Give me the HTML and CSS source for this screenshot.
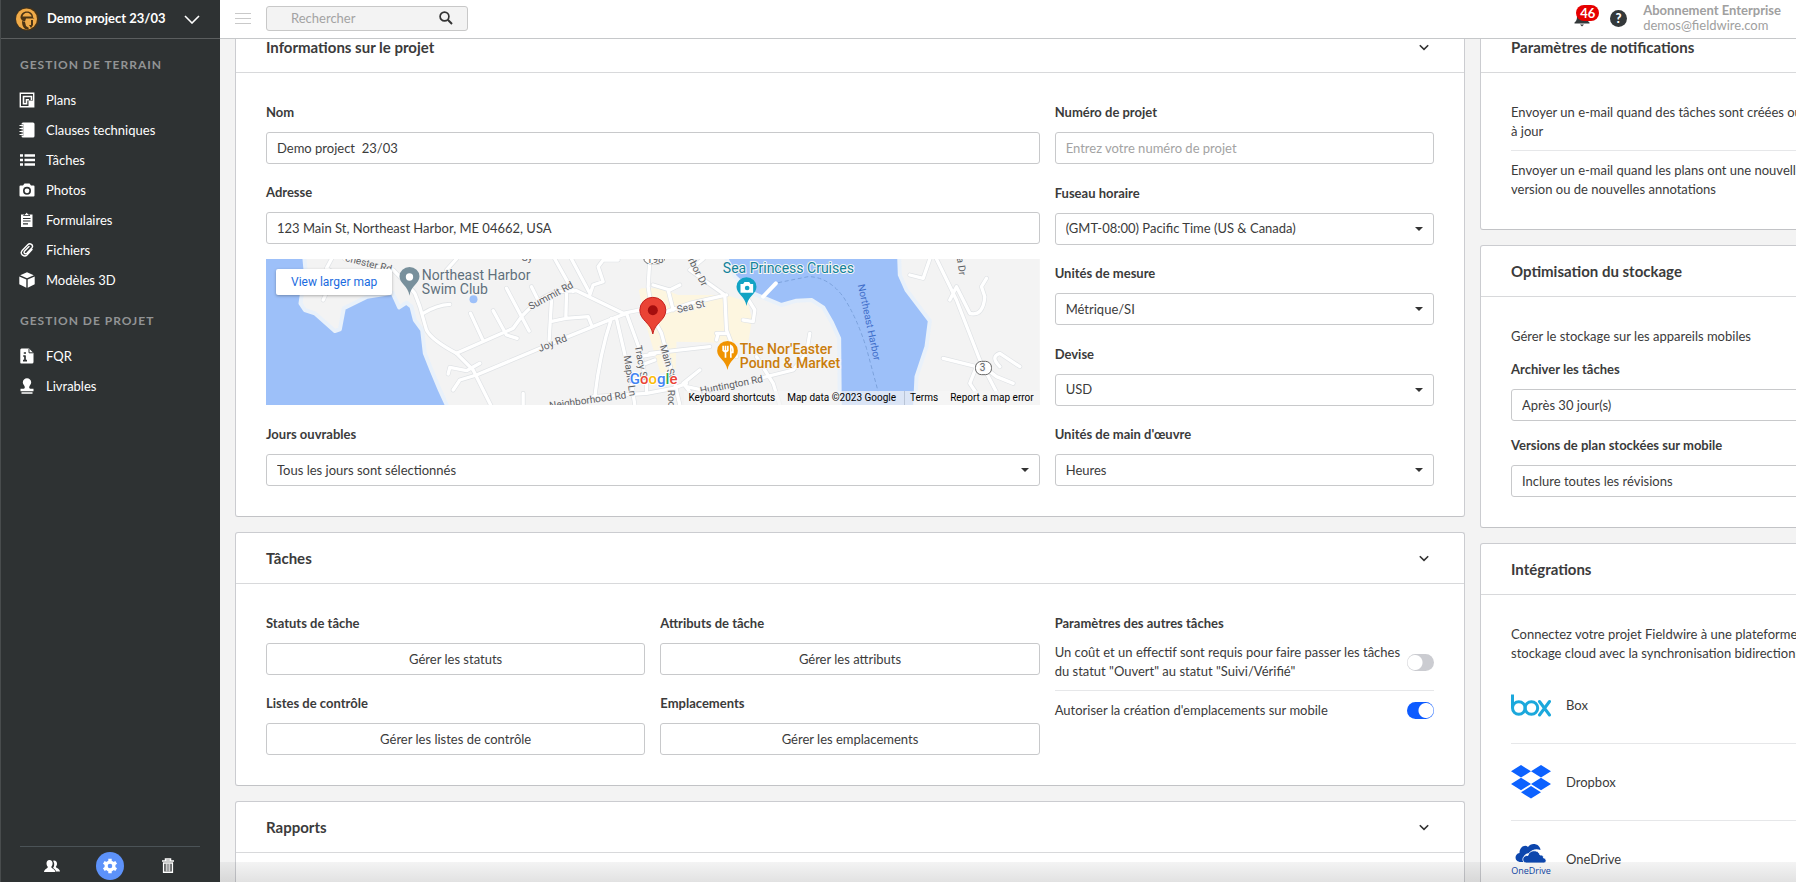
FILE: index.html
```html
<!DOCTYPE html>
<html lang="fr">
<head>
<meta charset="utf-8">
<meta name="viewport" content="width=device-width, initial-scale=1">
<title>Demo project 23/03 – Paramètres</title>
<link rel="stylesheet" href="styles.css">
</head>
<body>
<div class="app">
  <aside class="sidebar">
    <button class="project" type="button">
      <svg class="project-logo" viewBox="0 0 24 24" aria-hidden="true">
        <circle cx="12" cy="12" r="11.500" fill="#4a3416"/>
        <circle cx="11.500" cy="12" r="10.500" fill="#f0ab49"/>
        <path d="M5.500 11c0-4 2.500-6.500 6.500-6.500s6 2.500 6 6l1.500 1H11l-1 3-3-1z" fill="#4a3416"/>
        <path d="M7.500 9.500c.5-2 2-3.800 4.500-3.800s4.200 1.800 4.600 3.800z" fill="#f0ab49"/>
        <path d="M7 14l3 1 1 4 3 2-1 1.500c-4 0-6-3-6-8.500zM16 13h2v5l-2 3-2-3h2z" fill="#4a3416"/>
      </svg>
      <span class="project-name">Demo project 23/03</span>
      <svg class="project-chevron" viewBox="0 0 16 9" aria-hidden="true"><path d="M1 1l7 7 7-7" fill="none" stroke="#fff" stroke-width="1.600"/></svg>
    </button>

    <nav class="nav">
      <h2 class="nav-title">Gestion de terrain</h2>
      <ul class="nav-list">
        <li><a class="nav-item" href="#plans"><svg viewBox="0 0 16 16" aria-hidden="true"><path d="M1.300 1.300h13.400v13.400H1.300z" fill="none" stroke="#fff" stroke-width="1.400"/><path d="M4.500 12.500V4.500h8V8M4.500 11.700H7.500V7.700h2.500" fill="none" stroke="#fff" stroke-width="1.600"/><path d="M9.500 8.500H15V15H9.500z" fill="#fff"/></svg>Plans</a></li>
        <li><a class="nav-item" href="#clauses"><svg viewBox="0 0 16 16" aria-hidden="true"><path d="M4 .5h10a1.500 1.500 0 0 1 1.500 1.500v12a1.500 1.500 0 0 1-1.500 1.500H4A1.500 1.500 0 0 1 2.500 14V2A1.500 1.500 0 0 1 4 .5z" fill="#fff"/><path d="M.5 3.500h4M.5 6.500h4M.5 9.500h4M.5 12.500h4" stroke="#2e3233" stroke-width="2"/><path d="M.5 3.500h4M.5 6.500h4M.5 9.500h4M.5 12.500h4" stroke="#fff" stroke-width="1.200"/></svg>Clauses techniques</a></li>
        <li><a class="nav-item" href="#taches"><svg viewBox="0 0 16 16" aria-hidden="true"><path d="M1 3.500h3M1 8h3M1 12.500h3M5.500 3.500H16M5.500 8H16M5.500 12.500H16" stroke="#fff" stroke-width="2.400"/></svg>Tâches</a></li>
        <li><a class="nav-item" href="#photos"><svg viewBox="0 0 16 16" aria-hidden="true"><path fill="#fff" fill-rule="evenodd" d="M5.500 1.500h5L12 3.500h2.500A1 1 0 0 1 15.500 4.500v9a1 1 0 0 1-1 1h-13a1 1 0 0 1-1-1v-9a1 1 0 0 1 1-1H4zM8 4.800a4 4 0 1 0 0 8 4 4 0 0 0 0-8zm0 1.600a2.400 2.400 0 1 1 0 4.800 2.400 2.400 0 0 1 0-4.800z"/></svg>Photos</a></li>
        <li><a class="nav-item" href="#formulaires"><svg viewBox="0 0 16 16" aria-hidden="true"><path d="M2 2.500h11.500V15H2z" fill="#fff"/><path d="M4.500 3.500L7.700.5 11 3.500z" fill="#fff" stroke="#2e3233" stroke-width=".8"/><path d="M4 6.500h7.500M4 9h7.500M4 11.800h5" stroke="#2e3233" stroke-width="1.200"/></svg>Formulaires</a></li>
        <li><a class="nav-item" href="#fichiers"><svg viewBox="0 0 16 16" aria-hidden="true"><path d="M13 7.500l-5 5.500c-2.500 2.600-7.500-.8-5-4.200L9 2.500c2-2 5.800.6 4 3.200L7.800 11.300c-1.400 1.300-3.600-.4-2.400-2L10 4.500" fill="none" stroke="#fff" stroke-width="1.400" stroke-linecap="round"/></svg>Fichiers</a></li>
        <li><a class="nav-item" href="#modeles"><svg viewBox="0 0 16 16" aria-hidden="true"><path d="M8 .3l6.800 3L8 6.300l-6.800-3zM.3 4.500l7 3v8.200l-7-3.400zM15.700 4.500l-7 3v8.200l7-3.400z" fill="#fff"/></svg>Modèles 3D</a></li>
      </ul>
      <h2 class="nav-title">Gestion de projet</h2>
      <ul class="nav-list">
        <li><a class="nav-item" href="#fqr"><svg viewBox="0 0 16 16" aria-hidden="true"><path d="M2.500.5H10l4.500 4.500v9a1.500 1.500 0 0 1-1.500 1.500H2.500A1.200 1.200 0 0 1 1.300 14V2A1.500 1.500 0 0 1 2.500.5z" fill="#fff"/><path d="M10 .8v4h4.300" fill="none" stroke="#2e3233" stroke-width="1"/><path d="M4.800 5h2.200M4.200 8h2.500M4 12.700h4M6 8v4.500" fill="none" stroke="#2e3233" stroke-width="1.700"/></svg>FQR</a></li>
        <li><a class="nav-item" href="#livrables"><svg viewBox="0 0 16 16" aria-hidden="true"><path d="M8 .3a4.200 4.200 0 0 1 4.200 4.200c0 2-2 3-2 4.800 0 1 .8 1.500 2 1.500h2.300v2.400h-13v-2.400h2.300c1.200 0 2-.5 2-1.500 0-1.800-2-2.800-2-4.800A4.200 4.200 0 0 1 8 .3zM2.500 14.300h11v1.400h-11z" fill="#fff"/></svg>Livrables</a></li>
      </ul>
    </nav>

    <div class="sidebar-foot">
      <button class="foot-btn" type="button" aria-label="Utilisateurs"><svg viewBox="0 0 16 16" aria-hidden="true"><path d="M10 2.500c2 0 3 1.400 3 3.200 0 1.400-.6 2.300-1.200 3 .3 1.500 4 1.700 4.200 4.800h-4c-.3-2-2-3-3-3.500.6-1 1.200-2 1.200-3.800 0-1.500-.5-2.500-1-3.300.2-.3.500-.4.800-.4z" fill="#fff"/><path d="M5.500 2c2 0 3.100 1.500 3.100 3.500 0 1.600-.7 2.700-1.400 3.400.3 1.600 4 1.800 4.200 5.100H0c.2-3.300 3.600-3.500 3.900-5.100C3.200 8.200 2.500 7.100 2.500 5.500 2.500 3.500 3.500 2 5.500 2z" fill="#fff"/></svg></button>
      <button class="foot-btn foot-btn-active" type="button" aria-label="Paramètres"><svg viewBox="0 0 16 16" aria-hidden="true"><circle cx="8" cy="8" r="3.900" fill="none" stroke="#fff" stroke-width="3.200"/><path d="M8 .8v2.500M8 12.700v2.500M1.800 4.400L4 5.700M12 10.300l2.200 1.300M1.800 11.600L4 10.300M12 5.700l2.200-1.300" stroke="#fff" stroke-width="3.400"/></svg></button>
      <button class="foot-btn" type="button" aria-label="Corbeille"><svg viewBox="0 0 16 16" aria-hidden="true"><path d="M5.500 2.500V1h5v1.500M2 3h12" fill="none" stroke="#fff" stroke-width="1.500"/><path d="M3.600 5h8.800v9.300h-8.800z" fill="none" stroke="#fff" stroke-width="1.400"/><path d="M6.200 5.500v8M8 5.500v8M9.800 5.500v8" stroke="#fff" stroke-width="1.100"/></svg></button>
    </div>
  </aside>

  <div class="page">
    <header class="topbar">
      <button class="burger" type="button" aria-label="Menu"><svg viewBox="0 0 16 12" aria-hidden="true"><path d="M0 1.500h16M0 6.500h16M0 11.500h16" stroke="#c9c9c9"/></svg></button>
      <form class="search" role="search">
        <input class="search-input" type="text" placeholder="Rechercher" aria-label="Rechercher">
        <button class="search-btn" type="button" aria-label="Lancer la recherche"><svg viewBox="0 0 14 14" aria-hidden="true"><circle cx="5.500" cy="5.500" r="4.400" fill="none" stroke="#333" stroke-width="1.700"/><path d="M8.800 8.800l4.200 4.200" stroke="#333" stroke-width="2"/></svg></button>
      </form>
      <div class="account">
        <button class="bell" type="button" aria-label="Notifications"><svg viewBox="0 0 16 18" aria-hidden="true"><path d="M8 2c3.500 0 5 2.500 5 5.500 0 3.500.8 4.500 2.500 6v1H.5v-1C2.200 12 3 11 3 7.500 3 4.500 4.500 2 8 2zM6 15.500h4L8 17.500z" fill="#34393b"/></svg><span class="badge">46</span></button>
        <button class="help" type="button" aria-label="Aide">?</button>
        <div class="user"><strong>Abonnement Enterprise</strong><span>demos@fieldwire.com</span></div>
      </div>
    </header>

    <main class="scroller">
      <div class="columns">
        <div class="column">
          <section class="card">
            <header class="card-head"><h2>Informations sur le projet</h2><button class="fold" type="button" aria-label="Replier"><svg viewBox="0 0 10 7" aria-hidden="true"><path d="M.8 1.200L5 5.400l4.200-4.200" fill="none" stroke="#333" stroke-width="1.600"/></svg></button></header>
            <div class="card-body thirds">
              <div class="info-main">
                <div class="field"><label for="nom">Nom</label><input class="control" id="nom" type="text" value="Demo project  23/03"></div>
                <div class="address">
                  <div class="field"><label for="adresse">Adresse</label><input class="control" id="adresse" type="text" value="123 Main St, Northeast Harbor, ME 04662, USA"></div>
                  <div class="map">
                    <svg class="map-canvas" viewBox="0 0 774 146" preserveAspectRatio="xMidYMid slice" role="img" aria-label="Carte de Northeast Harbor">
                      <defs>
                        <g id="roads" fill="none" stroke-linejoin="round" stroke-linecap="round">
                          <path d="M190 150L208 110 225 70 200 55 215 27M255 27L400 60 440 100 465 130 480 170 500 240Q515 270 590 310L640 360 695 470"/>
                          <path d="M590 310L760 235 785 200Q850 130 900 125L950 122 1090 190 1140 180M490 190Q530 165 570 163M740 115L808 243M815 110L832 145M700 182L740 255 772 265M632 190L668 268M940 125L885 27M920 130L918 205 872 215M868 270L875 150M918 205L985 200 995 225M990 135L1000 105 1030 95 1015 50 1030 30 1075 30M990 130L935 27M560 60L590 27"/>
                          <path d="M580 420L600 390 650 375 900 270 1060 205 1100 190M565 372L570 352 620 362 660 340M1055 205Q1020 310 1005 440M1070 205L1115 400 1125 465M1100 190L1140 300 1160 400 1160 430M1000 440L1160 430 1240 415 1280 400M790 430L790 465M1140 320L1185 312M1145 345L1185 330"/>
                          <path d="M1170 27L1165 110 1178 200 1205 250 1245 400 1260 465M1140 180L1220 185 1290 160 1400 135M1290 60L1395 135 1400 240 1430 320M1330 27L1290 60M1180 105L1230 120 1260 105M1225 120L1240 180M1370 250L1400 250M1370 270L1375 250M1170 310L1350 290M1270 400L1320 465M1270 400L1320 360M1280 410L1350 425 1520 380 1600 360 1640 310 1650 250M1450 210L1480 215 1485 180 1460 140M1490 320L1540 400 1560 465"/>
                          <path d="M2030 27L2090 150 2160 330 2230 465M2070 150L2090 110 2130 190Q2170 200 2175 140L2165 110 2180 85M2010 27L1990 85 1950 75M2050 325L2150 350 2130 400 2150 430 2120 440M2165 345L2210 380 2260 400M2220 350Q2190 320 2220 310L2280 350"/>
                        </g>
                      </defs>
                      <rect width="774" height="146" fill="#f3f3f3"/>
                      <g transform="translate(-6 -9) scale(.33333)">
                        <path fill="#fdf6e0" d="M1145 115h60l50 20 145 0 62 20 15 50-12 75-215-5-3 85-45 10-45-150-20-100z"/>
                        <g stroke="#e9f1fa" stroke-width="12" stroke-linejoin="round" fill="#9dc0f9">
                          <path d="M8 17H133l4 43-15 100 13 20 30 10 60 53 15-5 12-63 70-35 76-12 20 44 22-14 15 12 10 40 22 30 8 70 20 50 25 60 30 65H8z"/>
                          <path d="M1396 17l29 63 55 50 85 35 45-13 45-2 35 22 25 43 23 50 2 220h225l5-105 30-90 10-78-70-92-20-45-2-58z"/>
                        </g>
                        <circle cx="641" cy="148" r="12" fill="#9dc0f9"/>
                        <use href="#roads" stroke="#dfe2e5" stroke-width="14"/>
                        <use href="#roads" stroke="#fff" stroke-width="10"/>
                        <path d="M1510 140l38-40" stroke="#fff" stroke-width="12" stroke-linecap="round"/>
                        <path d="M1555 98l90-18q60 0 105 60 40 60 70 155l35 130" fill="none" stroke="#7ba2dc" stroke-width="3" stroke-dasharray="12 8"/>
                        <rect x="2147" y="334" width="48" height="40" rx="18" fill="#fff" stroke="#666" stroke-width="3"/>
                        <rect x="1152" y="5" width="62" height="36" rx="16" fill="#fff" stroke="#666" stroke-width="3"/>
                        <path d="M449 137c-4-30-30-35-30-58a30 28 0 0 1 60 0c0 23-26 28-30 58z" fill="#78909c"/><circle cx="449" cy="81" r="11" fill="#fff"/>
                        <path d="M1460 168c-4-30-30-35-30-58a30 28 0 0 1 60 0c0 23-26 28-30 58z" fill="#12a3c4"/><path d="M1442 102h8l4-6h14l4 6h8v26h-38z" fill="#fff"/><circle cx="1462" cy="114" r="7" fill="#12a3c4"/>
                        <path d="M1403 360c-4-30-31-35-31-58a31 29 0 0 1 62 0c0 23-27 28-31 58z" fill="#f09300"/><path d="M1390 287v14q7 8 14 0v-14M1397 287v36M1413 323v-36q8 4 6 20h-6" fill="none" stroke="#fff" stroke-width="5"/>
                        <path d="M1179 252c-5-34-39-40-39-72a39 38 0 0 1 78 0c0 32-34 38-39 72z" fill="#ea4335" stroke="#c5221f" stroke-width="3"/><circle cx="1179" cy="181" r="15" fill="#a50e0e"/>
                      </g>
                      <g class="map-road-text">
                        <text transform="translate(79 2) rotate(14)">chester Rd</text>
                        <text transform="translate(265 51) rotate(-28)">Summit Rd</text>
                        <text transform="translate(274 93) rotate(-22)">Joy Rd</text>
                        <text transform="translate(284 150) rotate(-8)">Neighborhood Rd</text>
                        <text transform="translate(358 97) rotate(82)">Maple Ln</text>
                        <text transform="translate(369 87) rotate(80)">Tracy St</text>
                        <text transform="translate(394 87) rotate(74)">Main St</text>
                        <text transform="translate(402 131) rotate(88)">Rock</text>
                        <text transform="translate(412 54) rotate(-13)">Sea St</text>
                        <text transform="translate(422 1) rotate(62)">rbor Dr</text>
                        <text transform="translate(435 135) rotate(-11)">Huntington Rd</text>
                        <text transform="translate(691 -1) rotate(82)">a Dr</text>
                        <text x="256" y="2">Sy</text>
                        <text x="381" y="4">198</text>
                        <text x="714" y="112">3</text>
                      </g>
                      <text class="map-water-text" transform="translate(592 26) rotate(78)">Northeast Harbor</text>
                      <g class="map-place">
                        <text x="156" y="21" fill="#5f707c">Northeast Harbor</text>
                        <text x="156" y="35" fill="#5f707c">Swim Club</text>
                        <text x="457" y="14" fill="#11829b">Sea Princess Cruises</text>
                        <text class="map-strong" x="474" y="95" fill="#ca7d0c">The Nor'Easter</text>
                        <text class="map-strong" x="474" y="109" fill="#ca7d0c">Pound &amp; Market</text>
                      </g>
                      <text class="map-brand" x="364" y="125"><tspan fill="#4285f4">G</tspan><tspan fill="#ea4335">o</tspan><tspan fill="#fbbc05">o</tspan><tspan fill="#4285f4">g</tspan><tspan fill="#34a853">l</tspan><tspan fill="#ea4335">e</tspan></text>
                    </svg>
                    <a class="map-link" href="#map">View larger map</a>
                    <div class="map-legal"><button type="button">Keyboard shortcuts</button><span>Map data ©2023 Google</span><a class="map-terms" href="#terms">Terms</a><a href="#report">Report a map error</a></div>
                  </div>
                </div>
                <div class="field"><label for="jours">Jours ouvrables</label><div class="select"><select class="control" id="jours"><option>Tous les jours sont sélectionnés</option></select></div></div>
              </div>
              <div class="info-side">
                <div class="field"><label for="numero">Numéro de projet</label><input class="control" id="numero" type="text" placeholder="Entrez votre numéro de projet"></div>
                <div class="field"><label for="fuseau">Fuseau horaire</label><div class="select"><select class="control" id="fuseau"><option>(GMT-08:00) Pacific Time (US &amp; Canada)</option></select></div></div>
                <div class="field"><label for="unites">Unités de mesure</label><div class="select"><select class="control" id="unites"><option>Métrique/SI</option></select></div></div>
                <div class="field"><label for="devise">Devise</label><div class="select"><select class="control" id="devise"><option>USD</option></select></div></div>
                <div class="field"><label for="oeuvre">Unités de main d'œuvre</label><div class="select"><select class="control" id="oeuvre"><option>Heures</option></select></div></div>
              </div>
            </div>
          </section>

          <section class="card">
            <header class="card-head"><h2>Tâches</h2><button class="fold" type="button" aria-label="Replier"><svg viewBox="0 0 10 7" aria-hidden="true"><path d="M.8 1.200L5 5.400l4.200-4.200" fill="none" stroke="#333" stroke-width="1.600"/></svg></button></header>
            <div class="card-body thirds">
              <div class="task-actions">
                <div class="field"><h3>Statuts de tâche</h3><button class="control action" type="button">Gérer les statuts</button></div>
                <div class="field"><h3>Attributs de tâche</h3><button class="control action" type="button">Gérer les attributs</button></div>
                <div class="field"><h3>Listes de contrôle</h3><button class="control action" type="button">Gérer les listes de contrôle</button></div>
                <div class="field"><h3>Emplacements</h3><button class="control action" type="button">Gérer les emplacements</button></div>
              </div>
              <div class="field">
                <h3>Paramètres des autres tâches</h3>
                <div class="toggles">
                  <label class="toggle-row"><span>Un coût et un effectif sont requis pour faire passer <span class="keep">les tâches</span> du statut "Ouvert" au statut "Suivi/Vérifié"</span><input class="toggle" type="checkbox"></label>
                  <label class="toggle-row"><span>Autoriser la création d'emplacements sur mobile</span><input class="toggle" type="checkbox" checked></label>
                </div>
              </div>
            </div>
          </section>

          <section class="card">
            <header class="card-head"><h2>Rapports</h2><button class="fold" type="button" aria-label="Replier"><svg viewBox="0 0 10 7" aria-hidden="true"><path d="M.8 1.200L5 5.400l4.200-4.200" fill="none" stroke="#333" stroke-width="1.600"/></svg></button></header>
            <div class="card-body"></div>
          </section>
        </div>

        <div class="column">
          <section class="card">
            <header class="card-head"><h2>Paramètres de notifications</h2></header>
            <div class="card-body toggles">
              <label class="toggle-row"><span>Envoyer un e-mail quand des tâches sont créées ou mises <span class="keep">à jour</span></span><input class="toggle" type="checkbox" checked></label>
              <label class="toggle-row"><span>Envoyer un e-mail quand les plans ont une nouvelle <span class="keep">version ou</span> de nouvelles annotations</span><input class="toggle" type="checkbox" checked></label>
            </div>
          </section>

          <section class="card">
            <header class="card-head"><h2>Optimisation du stockage</h2></header>
            <div class="card-body storage">
              <p>Gérer le stockage sur les appareils mobiles</p>
              <div class="field"><label for="archiver">Archiver les tâches</label><div class="select"><select class="control" id="archiver"><option>Après 30 jour(s)</option></select></div></div>
              <div class="field"><label for="versions">Versions de plan stockées sur mobile</label><div class="select"><select class="control" id="versions"><option>Inclure toutes les révisions</option></select></div></div>
            </div>
          </section>

          <section class="card">
            <header class="card-head"><h2>Intégrations</h2></header>
            <div class="card-body">
              <p class="intro">Connectez votre projet Fieldwire à une plateforme de stockage cloud avec la synchronisation bidirectionnelle</p>
              <ul class="services">
                <li class="service"><svg viewBox="0 0 40 40" aria-hidden="true"><g fill="none" stroke="#1ba8dc" stroke-width="3"><path d="M1.500 9.500v13.500" /><circle cx="7.800" cy="23" r="6.300"/><circle cx="20.400" cy="23" r="6.300"/><path d="M28.500 16.500l10 13.500M38.500 16.500L28.500 30" stroke-linecap="round"/></g></svg>Box</li>
                <li class="service"><svg viewBox="0 0 40 40" aria-hidden="true"><path fill="#0d62ff" d="M10 3l10 6.300-10 6.300L0 9.300zM30 3l10 6.300-10 6.300-10-6.300zM10 15.700L20 22l-10 6.200L0 22zM30 15.700L40 22l-10 6.200L20 22zM20 24l10 6.300-10 6.300-10-6.300z"/></svg>Dropbox</li>
                <li class="service"><svg viewBox="0 0 40 40" aria-hidden="true"><path fill="#0c46ad" d="M10 23c-7 0-7-8-1.500-9C8.500 8 14 5 17 8c3-5 12-3.500 12.500 3-5-2-9 0-10.500 3-5 0-8 3.500-6.500 9z"/><path fill="#0c46ad" stroke="#fff" stroke-width=".8" d="M15 24c-5-1-4-8 2-7.500 1-6 10.500-6.500 12-.5 2.500-.3 3.500 1 3.500 3 3.500.5 3.500 5 0 5z"/><text class="service-word" x="20" y="35" text-anchor="middle">OneDrive</text></svg>OneDrive</li>
              </ul>
            </div>
          </section>
        </div>
      </div>
    </main>
  </div>
</div>
</body>
</html>
```

FILE: styles.css
```css
* { box-sizing: border-box; }

body {
  margin: 0;
  font: 13px/19px Lato, "Liberation Sans", sans-serif;
  color: #3b3b3b;
  background: #f3f3f3;
}

h2, h3, p, ul { margin: 0; padding: 0; }
ul { list-style: none; }
button, input, select { font: inherit; color: inherit; }
button { border: 0; padding: 0; background: none; cursor: pointer; }
svg { display: block; }

.app {
  display: flex;
  height: 100vh;
  overflow: hidden;
}

/* Sidebar */
.sidebar {
  flex: none;
  width: 220px;
  display: flex;
  flex-direction: column;
  background: #2e3233;
  border-left: 1px solid #484c4d;
  color: #fff;
}

.project {
  height: 39px;
  display: flex;
  align-items: center;
  padding: 0 20px 2px 14px;
  border-bottom: 1px solid #5b5e5f;
}
.project-logo { width: 24px; height: 24px; margin-top: 2px; }
.project-name { margin-left: 8px; font-weight: 700; }
.project-chevron { width: 16px; height: 9px; margin: 2px 0 0 auto; }

.nav { flex: 1; }
.nav-title {
  margin: 16px 19px 10px;
  font-size: 12px;
  line-height: 20px;
  letter-spacing: 1px;
  text-transform: uppercase;
  color: #929495;
}
.nav-item {
  display: flex;
  align-items: center;
  gap: 11px;
  height: 30px;
  padding-left: 18px;
  color: #fff;
  text-decoration: none;
}
.nav-item svg { width: 16px; height: 16px; }

.sidebar-foot {
  display: flex;
  justify-content: center;
  gap: 30px;
  margin: 0 20px 0 19px;
  padding: 5px 0 2px;
  border-top: 1px solid #4b5357;
}
.foot-btn {
  width: 28px;
  height: 28px;
  display: grid;
  place-items: center;
  border-radius: 50%;
}
.foot-btn svg { width: 16px; height: 16px; }
.foot-btn-active { background: #5d92fa; }

/* Top bar */
.page {
  position: relative;
  flex: 1;
  min-width: 0;
  display: flex;
  flex-direction: column;
}
.page::after {
  content: "";
  position: absolute;
  inset: auto 0 0;
  height: 20px;
  background: linear-gradient(rgba(30, 35, 40, .05), rgba(30, 30, 30, .13));
  pointer-events: none;
}

.topbar {
  flex: none;
  height: 39px;
  display: flex;
  align-items: center;
  padding: 0 15px 2px;
  background: #fff;
  border-bottom: 1px solid #c6c8ca;
}
.burger svg { width: 16px; height: 12px; }
.search {
  display: flex;
  align-items: center;
  width: 202px;
  height: 25px;
  margin-left: 15px;
  padding: 0 14px 0 24px;
  background: #f3f3f3;
  border: 1px solid #c8c8c8;
  border-radius: 3px;
}
.search-input {
  flex: 1;
  min-width: 0;
  padding: 0;
  border: 0;
  outline: 0;
  background: none;
}
.search-btn svg { width: 14px; height: 14px; }
::placeholder { color: #a3a3a3; opacity: 1; }

.account {
  display: flex;
  align-items: center;
  margin-left: auto;
}
.bell { position: relative; width: 16px; height: 18px; }
.bell svg { width: 16px; height: 18px; }
.badge {
  position: absolute;
  top: -4px;
  left: 2px;
  padding: 0 4px;
  border-radius: 8px;
  background: #e60000;
  color: #fff;
  font-size: 13px;
  font-weight: 700;
  line-height: 16px;
}
.help {
  width: 17px;
  height: 17px;
  margin: 0 16px 0 20px;
  border-radius: 50%;
  background: #34393b;
  color: #fff;
  font-size: 13px;
  font-weight: 900;
  line-height: 17px;
}
.user {
  display: flex;
  flex-direction: column;
  line-height: 15px;
  color: #a0a0a0;
}

/* Settings page */
.scroller {
  flex: 1;
  min-height: 0;
  overflow: hidden;
}
.columns {
  display: grid;
  grid-template-columns: minmax(0, 1fr) 430px;
  gap: 15px;
  align-items: start;
  margin: -18px -114px 0 15px;
}
.column {
  display: grid;
  gap: 15px;
}

.card {
  background: #fff;
  border: 1px solid #cbccd0;
  border-bottom-color: #c2c3c6;
  border-radius: 3px;
}
.card-head {
  display: flex;
  align-items: center;
  justify-content: space-between;
  height: 51px;
  padding: 0 35px 0 30px;
  border-bottom: 1px solid #d8d9db;
}
.card-head h2 { font-size: 15px; line-height: 20px; }
.fold svg { width: 10px; height: 7px; }
.card-body { padding: 30px; }

.field {
  display: flex;
  flex-direction: column;
  gap: 11px;
}
.field > label, .field > h3 {
  font-size: 13px;
  font-weight: 700;
  line-height: 18px;
}
.control {
  display: block;
  width: 100%;
  height: 32px;
  padding: 0 10px;
  border: 1px solid #c8c9cb;
  border-radius: 3px;
  background: #fff;
}
.select { position: relative; }
.select select { appearance: none; }
.select::after {
  content: "";
  position: absolute;
  top: 14px;
  right: 11px;
  border: 4px solid transparent;
  border-top-color: #333;
  border-bottom: 0;
  pointer-events: none;
}

.thirds {
  display: grid;
  grid-template-columns: repeat(3, minmax(0, 1fr));
  gap: 15px;
}
.info-main, .task-actions { grid-column: span 2; }
.info-main, .info-side {
  display: flex;
  flex-direction: column;
  justify-content: space-between;
}
.info-main { gap: 19px; }
.address { display: grid; gap: 15px; padding-bottom: 1px; }

.task-actions {
  display: grid;
  grid-template-columns: 1fr 1fr;
  gap: 19px 15px;
}

.toggle-row {
  display: flex;
  align-items: center;
  justify-content: space-between;
  gap: 2px;
}
.toggle-row + .toggle-row {
  margin-top: 9px;
  padding-top: 10px;
  border-top: 1px solid #e6e7e9;
}
.toggle {
  appearance: none;
  flex: none;
  width: 27px;
  height: 17px;
  margin: 0;
  border-radius: 9px;
  background: radial-gradient(circle at 8px 50%, #fff 7px, transparent 8px) #cbccd1;
}
.toggle:checked {
  background: radial-gradient(circle at 19px 50%, #fff 7px, transparent 8px) #0d5bff;
}
.keep { white-space: nowrap; }

.storage { display: grid; gap: 15px; }
.storage p { line-height: 18px; }
.intro { max-width: 340px; margin-bottom: 4px; }
.service {
  display: flex;
  align-items: center;
  gap: 15px;
  height: 77px;
  border-bottom: 1px solid #e6e7e9;
}
.service svg { width: 40px; height: 40px; }
.service-word { font: 9px "Open Sans", sans-serif; fill: #0c46ad; }

/* Map */
.map {
  position: relative;
  height: 146px;
  overflow: hidden;
  font-family: Roboto, sans-serif;
}
.map-canvas { width: 100%; height: 100%; }
.map-canvas text {
  paint-order: stroke;
  stroke: #f5f5f5;
  stroke-width: 2px;
}
.map-road-text { font-size: 10px; fill: #5d6064; }
.map-canvas .map-water-text { font-size: 10px; fill: #3f6ec9; stroke: none; }
.map-place { font-size: 14px; }
.map-strong { font-weight: 500; }
.map-canvas .map-brand { font-size: 15px; font-weight: 500; stroke: #fff; }
.map-link {
  position: absolute;
  top: 10px;
  left: 10px;
  padding: 0 15px;
  border-radius: 2px;
  background: #fff;
  box-shadow: 0 1px 3px rgba(0, 0, 0, .3);
  color: #1a6be0;
  font-size: 12px;
  line-height: 26px;
  text-decoration: none;
}
.map-legal {
  position: absolute;
  right: 0;
  bottom: 0;
  display: flex;
  gap: 12px;
  padding: 0 6px 0 4px;
  background: rgba(245, 245, 245, .7);
  color: #000;
  font-size: 10px;
  line-height: 14px;
}
.map-legal a { color: inherit; text-decoration: none; }
.map-terms { border-left: 1px solid #b9c4d6; margin-left: -4px; padding-left: 5px; }
```
